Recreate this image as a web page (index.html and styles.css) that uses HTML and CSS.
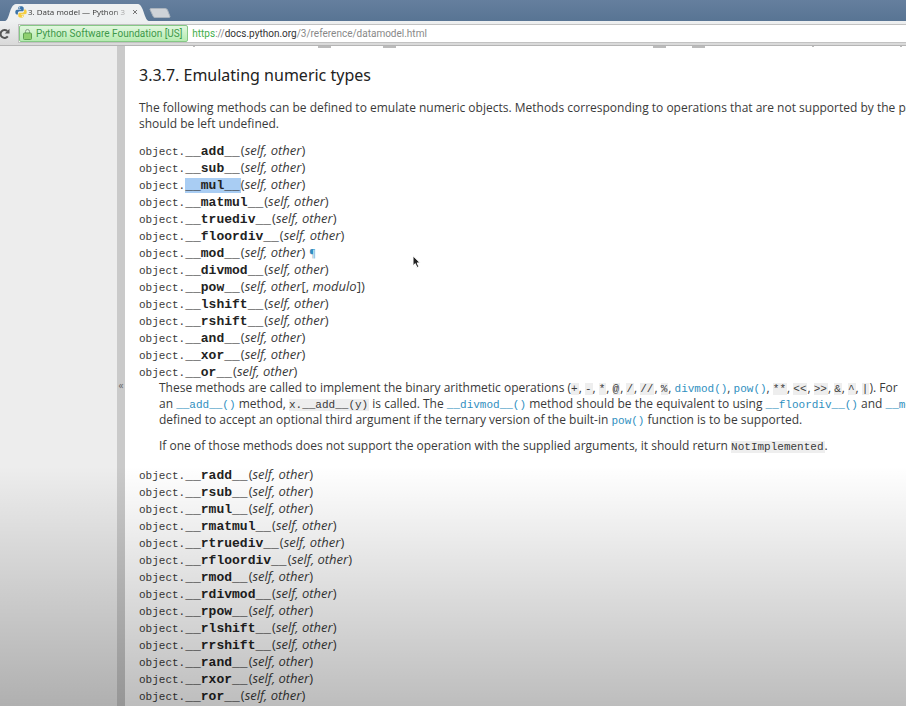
FILE: index.html
```html
<!DOCTYPE html>
<html lang="en">
<head>
<meta charset="utf-8">
<title>3. Data model — Python 3</title>
<link rel="stylesheet" href="styles.css">
</head>
<body>
<header class="browser">
  <div class="tabs">
    <div class="tab">
      <svg class="tab-shape" viewBox="0 0 144 18" preserveAspectRatio="none" aria-hidden="true"><path d="M0 18C5 17 4 2 11 1H133C139 2 139 17 144 18Z"/></svg>
      <svg class="favicon" viewBox="0 0 12 12" aria-hidden="true"><path fill="#3c74a8" d="M5.8.3C3.500.3 3.300 1.300 3.300 2v1.200h2.800v.5H2C.8 3.700.3 4.700.3 6s.5 2.400 1.500 2.400h1.100V7c0-1 .8-1.700 1.700-1.700h2.700c.8 0 1.400-.6 1.400-1.400V2C8.700.8 7.500.3 5.800.3z"/><path fill="#f5cd3f" d="M6.200 11.700c2.300 0 2.500-1 2.500-1.700V8.800H5.900v-.5H10c1.200 0 1.700-1 1.700-2.300s-.5-2.400-1.500-2.400H9.100V5c0 1-.8 1.700-1.700 1.700H4.700c-.8 0-1.400.6-1.400 1.400V10c0 1.200 1.200 1.700 2.900 1.700z"/><circle cx="4.600" cy="1.800" r=".6" fill="#fff"/><circle cx="7.400" cy="10.200" r=".6" fill="#fff"/></svg>
      <span class="tab-title">3. Data model — Python 3</span>
      <button class="tab-close" aria-label="Close tab"><svg viewBox="0 0 6 6"><path d="M1 1l4 4M5 1L1 5"/></svg></button>
    </div>
    <button class="new-tab" aria-label="New tab"><svg viewBox="0 0 22 10"><path d="M2 .5h14q2 0 2.500 1.500l2.500 6.500q0 1-1 1H6q-1.500 0-2-1.500L1 1.500q0-1 1-1z"/></svg></button>
  </div>
  <div class="toolbar">
    <button class="reload" aria-label="Reload"><svg viewBox="0 0 12 12"><path class="arc" d="M7.800 8.300A4 4 0 1 1 7.300 3"/><path class="head" d="M9.500.8v4.700H4.800z"/></svg></button>
    <div class="address">
      <span class="identity"><svg viewBox="0 0 9 12" aria-hidden="true"><path class="shackle" d="M2.500 6V3.500a2 2 0 0 1 4 0V6"/><rect class="lock" x=".5" y="5" width="8" height="6.500" rx="1"/></svg>Python Software Foundation [US]</span>
      <span class="url"><span class="scheme">https</span>://<b>docs.python.org</b>/3/reference/datamodel.html</span>
    </div>
  </div>
</header>
<div class="page">
  <aside class="sidebar"></aside>
  <button class="collapse" aria-label="Collapse sidebar">«</button>
  <main class="doc">
    <svg class="scrolled" width="781" height="2" viewBox="0 0 781 2" aria-hidden="true"><path d="M68 0h2v1h-2zM193 0h13v2h-13zM258 0h13v2h-13zM528 0h13v2h-13zM567 0h13v2h-13zM687 0h2v1h-2zM775 0h2v1h-2z"/></svg>
    <h3>3.3.7. Emulating numeric types</h3>
    <p>The following methods can be defined to emulate numeric objects. Methods corresponding to operations that are not supported by the particular<br>should be left undefined.</p>
    <dl>
      <dt><code>object.</code><code class="name">__add__</code>(<em>self, other</em>)</dt>
      <dt><code>object.</code><code class="name">__sub__</code>(<em>self, other</em>)</dt>
      <dt><code>object.</code><code class="name selected">__mul__</code>(<em>self, other</em>)</dt>
      <dt><code>object.</code><code class="name">__matmul__</code>(<em>self, other</em>)</dt>
      <dt><code>object.</code><code class="name">__truediv__</code>(<em>self, other</em>)</dt>
      <dt><code>object.</code><code class="name">__floordiv__</code>(<em>self, other</em>)</dt>
      <dt><code>object.</code><code class="name">__mod__</code>(<em>self, other</em>)<a class="permalink" href="#mod">¶</a></dt>
      <dt><code>object.</code><code class="name">__divmod__</code>(<em>self, other</em>)</dt>
      <dt><code>object.</code><code class="name">__pow__</code>(<em>self, other</em>[, <em>modulo</em>])</dt>
      <dt><code>object.</code><code class="name">__lshift__</code>(<em>self, other</em>)</dt>
      <dt><code>object.</code><code class="name">__rshift__</code>(<em>self, other</em>)</dt>
      <dt><code>object.</code><code class="name">__and__</code>(<em>self, other</em>)</dt>
      <dt><code>object.</code><code class="name">__xor__</code>(<em>self, other</em>)</dt>
      <dt><code>object.</code><code class="name">__or__</code>(<em>self, other</em>)</dt>
      <dd>
        <p>These methods are called to implement the binary arithmetic operations (<code class="lit">+</code>, <code class="lit">-</code>, <code class="lit">*</code>, <code class="lit">@</code>, <code class="lit">/</code>, <code class="lit">//</code>, <code class="lit">%</code>, <a href="#divmod"><code>divmod()</code></a>, <a href="#pow"><code>pow()</code></a>, <code class="lit">**</code>, <code class="lit">&lt;&lt;</code>, <code class="lit">&gt;&gt;</code>, <code class="lit">&amp;</code>, <code class="lit">^</code>, <code class="lit">|</code>). For<br>an <a href="#add"><code>__add__()</code></a> method, <code class="lit">x.__add__(y)</code> is called. The <a href="#divmod"><code>__divmod__()</code></a> method should be the equivalent to using <a href="#floordiv"><code>__floordiv__()</code></a> and <a href="#mod"><code>__mod__()</code></a><br>defined to accept an optional third argument if the ternary version of the built-in <a href="#pow"><code>pow()</code></a> function is to be supported.</p>
        <p>If one of those methods does not support the operation with the supplied arguments, it should return <code class="lit">NotImplemented</code>.</p>
      </dd>
    </dl>
    <dl>
      <dt><code>object.</code><code class="name">__radd__</code>(<em>self, other</em>)</dt>
      <dt><code>object.</code><code class="name">__rsub__</code>(<em>self, other</em>)</dt>
      <dt><code>object.</code><code class="name">__rmul__</code>(<em>self, other</em>)</dt>
      <dt><code>object.</code><code class="name">__rmatmul__</code>(<em>self, other</em>)</dt>
      <dt><code>object.</code><code class="name">__rtruediv__</code>(<em>self, other</em>)</dt>
      <dt><code>object.</code><code class="name">__rfloordiv__</code>(<em>self, other</em>)</dt>
      <dt><code>object.</code><code class="name">__rmod__</code>(<em>self, other</em>)</dt>
      <dt><code>object.</code><code class="name">__rdivmod__</code>(<em>self, other</em>)</dt>
      <dt><code>object.</code><code class="name">__rpow__</code>(<em>self, other</em>)</dt>
      <dt><code>object.</code><code class="name">__rlshift__</code>(<em>self, other</em>)</dt>
      <dt><code>object.</code><code class="name">__rrshift__</code>(<em>self, other</em>)</dt>
      <dt><code>object.</code><code class="name">__rand__</code>(<em>self, other</em>)</dt>
      <dt><code>object.</code><code class="name">__rxor__</code>(<em>self, other</em>)</dt>
      <dt><code>object.</code><code class="name">__ror__</code>(<em>self, other</em>)</dt>
    </dl>
  </main>
</div>
<div class="shade"></div>
<svg class="cursor" viewBox="0 0 9 14" aria-hidden="true"><path d="M1 .8v10l2.300-2.200 1.600 3.900 1.900-.8-1.600-3.800h3z"/></svg>
</body>
</html>
```
FILE: styles.css
```css
* { box-sizing: border-box; }
body { margin: 0; height: 100vh; overflow: hidden; display: flex; flex-direction: column; font: 12px/16px "Open Sans", sans-serif; color: #3a3a3a; background: #fff; }
button { border: 0; padding: 0; background: none; }
a { color: #2f8fc0; text-decoration: none; }
.browser { flex: none; }
.tabs { height: 21px; display: flex; align-items: flex-end; padding-left: 5px; background: linear-gradient(#657f9e, #587493); }
.tab { position: relative; width: 144px; height: 18px; display: flex; align-items: center; padding: 0 8px 0 10px; font: 8px/12px "Open Sans", sans-serif; }
.tab-shape { position: absolute; inset: 0; width: 100%; height: 100%; fill: #eef0f1; }
.favicon { position: relative; width: 12px; height: 12px; flex: none; }
.tab-title { position: relative; flex: 1; margin-left: 1px; white-space: nowrap; overflow: hidden; color: transparent; background: linear-gradient(90deg, #333 85%, #bbb); background-clip: text; }
.tab-close { position: relative; display: flex; align-items: center; width: 6px; height: 12px; margin: 0 3px 0 6px; }
.tab-close svg { display: block; width: 6px; height: 6px; stroke: #777; fill: none; }
.new-tab { width: 22px; height: 10px; margin-bottom: 3px; }
.new-tab svg { display: block; fill: #cfd3d8; stroke: #aab3bd; }
.toolbar { display: flex; height: 25px; padding-top: 1px; align-items: center; border-bottom: 1px solid #b5b5b5; background: linear-gradient(#eef0f1, #d9d9d9); }
.reload { flex: none; width: 18px; height: 12px; }
.reload svg { display: block; width: 12px; height: 12px; }
.arc { fill: none; stroke: #555; stroke-width: 2; }
.head { fill: #555; }
.address { flex: 1; height: 19px; display: flex; align-items: center; gap: 4px; background: #fff; border: 1px solid #c2c2c2; border-right: 0; font: 10px/16px Roboto, sans-serif; color: #888; white-space: nowrap; }
.identity { display: flex; align-items: center; gap: 4px; height: 17px; padding: 0 5px 0 3px; border: 1px solid #86c886; border-radius: 2px; background: linear-gradient(#e2f7df, #b5ebb0); color: #3d9949; }
.identity svg { width: 9px; height: 12px; }
.shackle { fill: none; stroke: #8a9a8a; }
.lock { fill: #8fd070; stroke: #5da050; }
.scheme { color: #3fae4a; }
.url b { font-weight: 400; color: #333; }
.page { flex: 1; display: flex; min-height: 0; }
.sidebar { flex: none; width: 117px; background: #ededed; }
.collapse { flex: none; width: 8px; padding-top: 18px; background: #cacaca; color: #666; font: 10px "Open Sans", sans-serif; }
.doc { flex: 1; min-width: 0; overflow: hidden; padding-left: 14px; white-space: nowrap; }
.scrolled { display: block; margin: 0 0 17px -14px; fill: #bbb; }
h3 { margin: 0 0 15px; font: 16px/20px "Noto Sans", sans-serif; color: #222; }
p { margin: 0 0 10px; }
dl { margin: 0 0 10px; }
dt { height: 17px; font: 13px/16px "Open Sans", sans-serif; }
dd { margin: 0 0 12px 20px; }
code { font: 11px/1 "Liberation Mono", monospace; }
.name { padding-right: 1px; font-size: 13px; font-weight: 700; color: #222; }
.selected { background: #a9cdf3; }
.lit { padding-right: 1px; background: #eee; }
.permalink { margin-left: 4px; font-size: 10px; line-height: 1; }
.shade { position: absolute; left: 0; right: 0; bottom: 0; height: 34%; background: linear-gradient(rgba(0,0,0,0), rgba(0,0,0,.26)); pointer-events: none; }
.cursor { position: absolute; left: 412px; top: 255px; width: 9px; height: 14px; fill: #222; stroke: #fff; stroke-width: 1; }
```
